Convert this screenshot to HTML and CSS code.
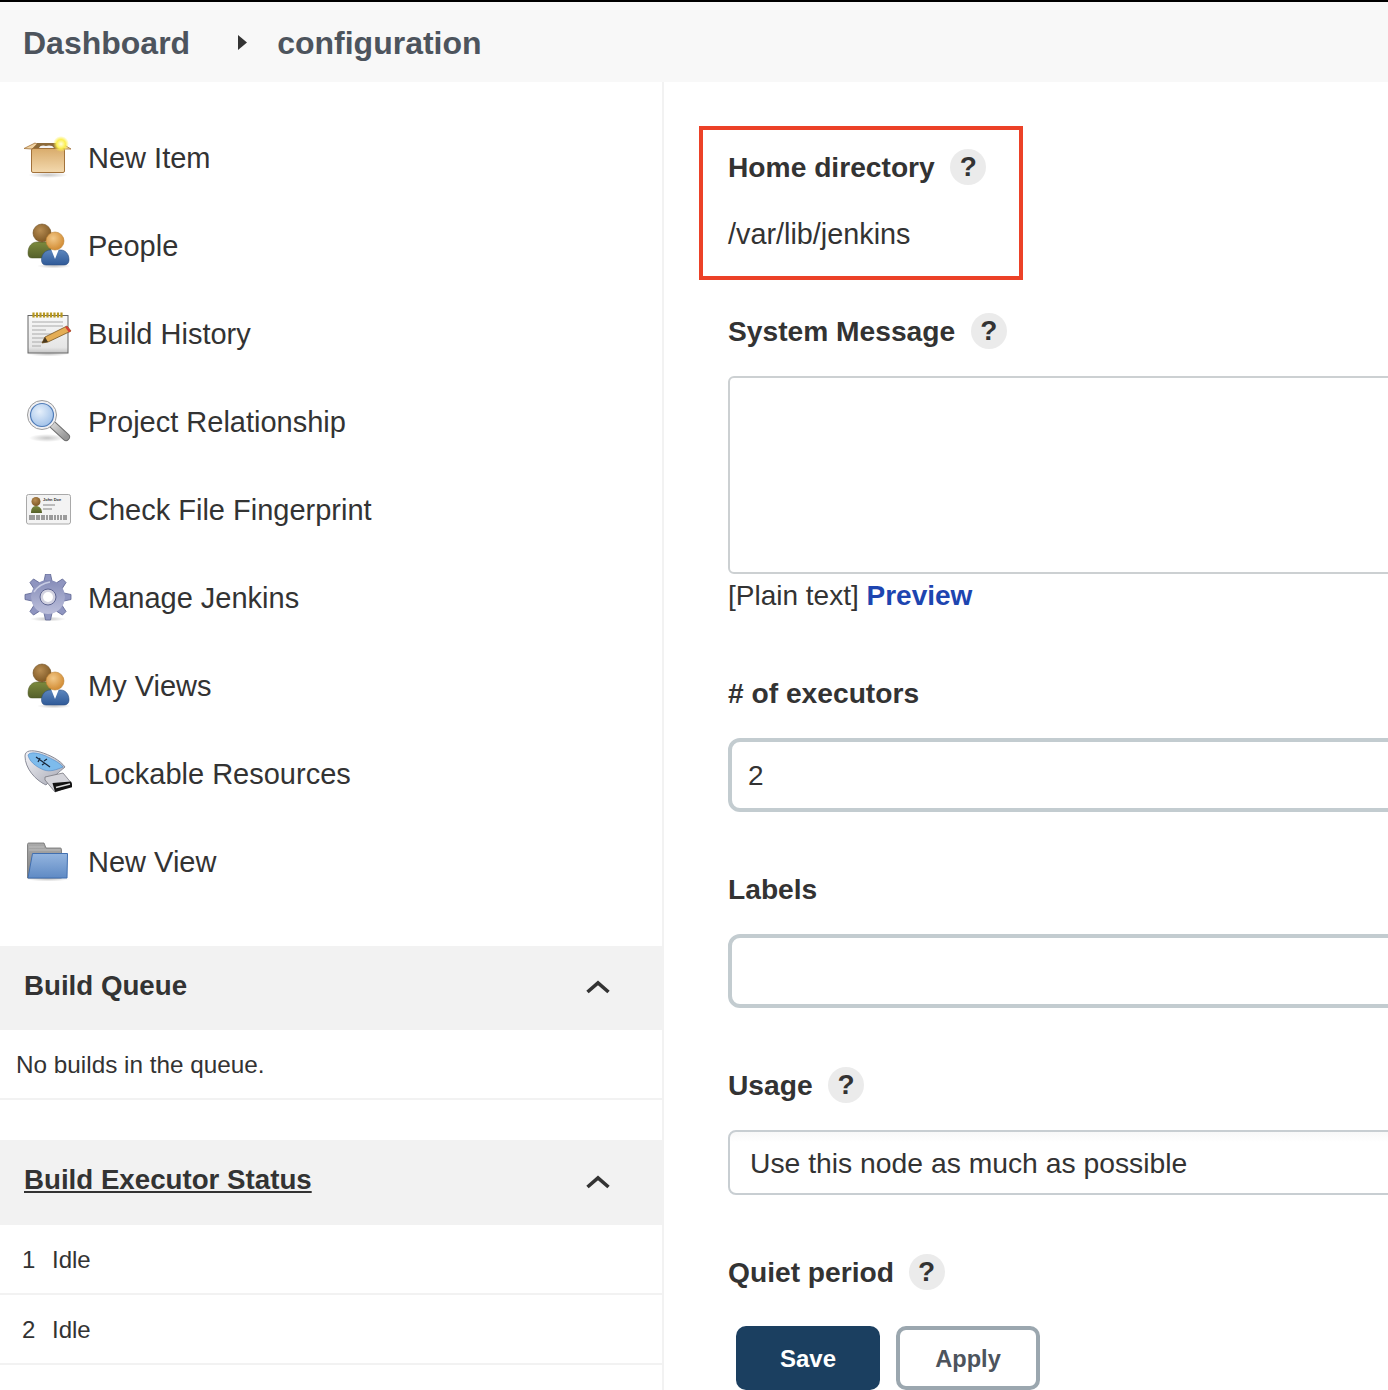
FILE: index.html
```html
<!DOCTYPE html>
<html lang="en">
<head>
<meta charset="utf-8">
<title>Configuration</title>
<link rel="stylesheet" href="styles.css">
</head>
<body>
<svg class="defs" width="0" height="0" aria-hidden="true">
  <defs>
    <linearGradient id="box" x1="0" y1="0" x2="0" y2="1"><stop offset="0" stop-color="#d9ac6c"/><stop offset="1" stop-color="#f3d9ae"/></linearGradient>
    <linearGradient id="bluebody" x1="0" y1="0" x2="0" y2="1"><stop offset="0" stop-color="#5c86bd"/><stop offset="1" stop-color="#2f5a98"/></linearGradient>
    <linearGradient id="greenbody" x1="0" y1="0" x2="0" y2="1"><stop offset="0" stop-color="#7c8a3e"/><stop offset="1" stop-color="#55602a"/></linearGradient>
    <radialGradient id="headb" cx=".4" cy=".35" r=".7"><stop offset="0" stop-color="#b88d52"/><stop offset="1" stop-color="#7b5522"/></radialGradient>
    <radialGradient id="heado" cx=".4" cy=".35" r=".7"><stop offset="0" stop-color="#f2c888"/><stop offset="1" stop-color="#d0882e"/></radialGradient>
    <radialGradient id="glass" cx=".4" cy=".35" r=".7"><stop offset="0" stop-color="#e6f0fb"/><stop offset="1" stop-color="#9fc0e8"/></radialGradient>
    <linearGradient id="gear" x1="0" y1="0" x2="0" y2="1"><stop offset="0" stop-color="#858cb8"/><stop offset="1" stop-color="#bdc0dc"/></linearGradient>
    <linearGradient id="folder" x1="0" y1="0" x2="0" y2="1"><stop offset="0" stop-color="#94b5df"/><stop offset="1" stop-color="#5f8ac4"/></linearGradient>
    <linearGradient id="folderback" x1="0" y1="0" x2="0" y2="1"><stop offset="0" stop-color="#aaa"/><stop offset="1" stop-color="#808080"/></linearGradient>
    <linearGradient id="usb" x1="0" y1="0" x2="1" y2="1"><stop offset="0" stop-color="#f4f4f8"/><stop offset="1" stop-color="#a4a6b2"/></linearGradient>
    <linearGradient id="handle" x1="0" y1="0" x2="1" y2="1"><stop offset="0" stop-color="#d2d2d2"/><stop offset="1" stop-color="#969696"/></linearGradient>
    <linearGradient id="note" x1="0" y1="0" x2="0" y2="1"><stop offset="0" stop-color="#f8f8f8"/><stop offset=".85" stop-color="#e6e6e6"/><stop offset="1" stop-color="#c4c4c4"/></linearGradient>
    <radialGradient id="shine"><stop offset="0" stop-color="#fffde0"/><stop offset=".55" stop-color="#fcef50"/><stop offset="1" stop-color="#fcef50" stop-opacity="0"/></radialGradient>
    <radialGradient id="shadow"><stop offset="0" stop-color="#000" stop-opacity=".22"/><stop offset="1" stop-color="#000" stop-opacity="0"/></radialGradient>
    <symbol id="people" viewBox="0 0 48 48">
      <ellipse cx="30" cy="44" rx="17" ry="2.500" fill="url(#shadow)"/>
      <path d="M4 31c0-7 4-11 9-11h10c5 0 7 4 7 9 0 4-3 7-10 7H8c-3 0-4-2-4-5z" fill="url(#greenbody)" stroke="#4a5425" stroke-width=".5"/>
      <circle cx="18" cy="11" r="9" fill="url(#headb)" stroke="#6f4e20" stroke-width=".6"/>
      <path d="M17.500 38c0-6 4-10 9-10h10c5 0 8.500 4 8.500 10 0 3-2 5-5 5H22c-3 0-4.500-2-4.500-5z" fill="url(#bluebody)" stroke="#2d4f82" stroke-width=".6"/>
      <path d="M27 27l4 10 4-10z" fill="#fff"/>
      <circle cx="31" cy="19" r="9" fill="url(#heado)" stroke="#bd8131" stroke-width=".6"/>
    </symbol>
  </defs>
</svg>

<nav class="crumbs">
  <a class="crumb">Dashboard</a>
  <svg class="crumb-arrow" viewBox="0 0 9 15" width="9" height="15"><path d="M0 0l9 7.500-9 7.500z" fill="#333"/></svg>
  <a class="crumb">configuration</a>
</nav>

<div class="page">
  <aside class="side">
    <ul class="tasks">
      <li class="task">
        <svg class="ico" viewBox="0 0 48 48"><ellipse cx="24" cy="41" rx="20" ry="3" fill="url(#shadow)"/><path d="M8 15l5-6h23l5 6z" fill="#8c6a3a"/><path d="M15 14c1-3 5-3 7-2 2-1 7-1 8 2z" fill="#f4f4f4"/><path d="M0 14.500L11 9l2 1-5 5z" fill="#f0d3a3" stroke="#a2723a" stroke-width=".8"/><path d="M47 15l-10-6-2 1 6 5z" fill="#f0d3a3" stroke="#a2723a" stroke-width=".8"/><rect x="7.500" y="14.500" width="33" height="24" rx="1.500" fill="url(#box)" stroke="#a2723a"/><circle cx="37" cy="10" r="8" fill="url(#shine)"/></svg>
        <span class="task-label">New Item</span>
      </li>
      <li class="task">
        <svg class="ico"><use href="#people"/></svg>
        <span class="task-label">People</span>
      </li>
      <li class="task">
        <svg class="ico" viewBox="0 0 48 48"><ellipse cx="24" cy="44" rx="21" ry="2.500" fill="url(#shadow)"/><rect x="4" y="5.500" width="40" height="37.500" fill="url(#note)" stroke="#666"/><path d="M9.500 2.500v5m3.500-5v5m3.500-5v5m3.500-5v5m3.500-5v5m3.500-5v5m3.500-5v5m3.500-5v5m3.500-5v5" stroke="#b8981f" stroke-width="2.200"/><path d="M8 12h31M8 16h31M8 20h14M8 24h28M8 28h14M8 32h12M8 36h9" stroke="#aaa"/><path d="M18 33l3-6 22-11 4 5-23 11z" fill="#e4ad55" stroke="#7a5520" stroke-width=".8"/><path d="M18 33l3-6 3 5z" fill="#4a3a20"/><path d="M41 17l2-1 4 5-2 1.500z" fill="#d4403a"/></svg>
        <span class="task-label">Build History</span>
      </li>
      <li class="task">
        <svg class="ico" viewBox="0 0 48 48"><ellipse cx="23" cy="40" rx="18" ry="4" fill="url(#shadow)"/><path d="M29 27l13 12" stroke="#6e6e6e" stroke-width="8" stroke-linecap="round"/><path d="M29 27l13 12" stroke="url(#handle)" stroke-width="6" stroke-linecap="round"/><circle cx="18" cy="17" r="14.500" fill="#f0f0f3" stroke="#9c9c9c"/><circle cx="18" cy="17" r="11.500" fill="url(#glass)" stroke="#4f7cb8" stroke-width="1.200"/></svg>
        <span class="task-label">Project Relationship</span>
      </li>
      <li class="task">
        <svg class="ico" viewBox="0 0 48 48"><rect x="2.500" y="8.500" width="44" height="29.500" rx="2" fill="#f3f3f3" stroke="#a9a9a9"/><circle cx="12" cy="15.500" r="4.500" fill="url(#headb)"/><path d="M7 27c0-5 2-7 5-7s6 2 6 7z" fill="url(#greenbody)"/><text class="card-name" x="19" y="15">John Doe</text><path d="M19 19h12M19 23h9" stroke="#aaa" stroke-width="1.300"/><path d="M6 29v5M8 29v5M10 29v5M13 29v5M15 29v5M18 29v5M20 29v5M23 29v5M26 29v5M28 29v5M31 29v5M34 29v5M37 29v5M40 29v5M42 29v5" stroke="#444"/></svg>
        <span class="task-label">Check File Fingerprint</span>
      </li>
      <li class="task">
        <svg class="ico" viewBox="0 0 48 48">
          <ellipse cx="24" cy="45" rx="18" ry="2.500" fill="url(#shadow)"/>
          <g stroke="#5d6492" stroke-width=".8" fill="#8f95c0">
            <path d="M20 7l1.500-7h5L28 7z"/>
            <path d="M20 7l1.500-7h5L28 7z" transform="rotate(45 24 23)"/>
            <path d="M20 7l1.500-7h5L28 7z" transform="rotate(90 24 23)"/>
            <path d="M20 7l1.500-7h5L28 7z" transform="rotate(135 24 23)"/>
            <path d="M20 7l1.500-7h5L28 7z" transform="rotate(180 24 23)"/>
            <path d="M20 7l1.500-7h5L28 7z" transform="rotate(225 24 23)"/>
            <path d="M20 7l1.500-7h5L28 7z" transform="rotate(270 24 23)"/>
            <path d="M20 7l1.500-7h5L28 7z" transform="rotate(315 24 23)"/>
          </g>
          <circle cx="24" cy="23" r="17" fill="url(#gear)"/>
          <path d="M10 18c4-6 9-9 16-10" fill="none" stroke="#d6d9ec" stroke-width="1.500" opacity=".8"/>
          <circle cx="24" cy="23" r="8" fill="#d2d2e0" stroke="#5d6492"/>
          <circle cx="24" cy="23" r="5" fill="#fff"/>
        </svg>
        <span class="task-label">Manage Jenkins</span>
      </li>
      <li class="task">
        <svg class="ico"><use href="#people"/></svg>
        <span class="task-label">My Views</span>
      </li>
      <li class="task">
        <svg class="ico" viewBox="0 0 48 48">
          <path d="M1 6C1 0 8 0 16 2c10 3 20 8 25 15-6 5-12 10-19 18C11 30 1 18 1 6z" fill="url(#usb)" stroke="#8a8c98"/>
          <path d="M4 5c2-4 12-2 20 2 6 3 12 6 15 10-7 3-13 5-19 3C12 17 5 11 4 5z" fill="#7dbbec" stroke="#4f86c4" stroke-width=".6"/>
          <path d="M12 7l14 10M16 8l-2 4M20 11l3-2M21 13l-3 2" stroke="#18263a" stroke-width="1.200"/>
          <path d="M21 27l18-4 10 12-18 7-10-12z" fill="#d4d4da" stroke="#77777f" stroke-width=".8"/>
          <path d="M28.500 33l18.500-1.500 2 5.500-18 5z" fill="#111"/>
          <path d="M32 37.500l14-3.500" stroke="#ddd" stroke-width="1.300"/>
        </svg>
        <span class="task-label">Lockable Resources</span>
      </li>
      <li class="task">
        <svg class="ico" viewBox="0 0 48 48"><ellipse cx="24" cy="41" rx="22" ry="2.500" fill="url(#shadow)"/><path d="M3.500 6.500c0-1 .5-1.500 1.500-1.500h15l2 5h14c1 0 1.500.5 1.500 1.500V40h-34z" fill="url(#folderback)" stroke="#6f6f6f" stroke-width=".8"/><path d="M5 9h15M5 12h31" stroke="#c4c4c4" stroke-width=".8"/><path d="M8.500 15.500h35L43 40H4z" fill="url(#folder)" stroke="#416fb0"/></svg>
        <span class="task-label">New View</span>
      </li>
    </ul>

    <section class="panel panel-queue">
      <header class="panel-head">
        <h2 class="panel-title">Build Queue</h2>
        <svg class="chev" viewBox="0 0 24 14" width="24" height="14"><path d="M1.500 12L12 2.800 22.500 12" fill="none" stroke="#333" stroke-width="3.600"/></svg>
      </header>
      <div class="panel-row panel-row-q">No builds in the queue.</div>
    </section>

    <section class="panel panel-exec">
      <header class="panel-head panel-head-exec">
        <h2 class="panel-title panel-link">Build Executor Status</h2>
        <svg class="chev" viewBox="0 0 24 14" width="24" height="14"><path d="M1.500 12L12 2.800 22.500 12" fill="none" stroke="#333" stroke-width="3.600"/></svg>
      </header>
      <div class="panel-row"><span class="num">1</span>Idle</div>
      <div class="panel-row"><span class="num">2</span>Idle</div>
    </section>
  </aside>

  <main class="main">
    <section class="home">
      <div class="label-line"><span class="label">Home directory</span><span class="help">?</span></div>
      <div class="home-val">/var/lib/jenkins</div>
    </section>

    <div class="label-line label-sys"><span class="label">System Message</span><span class="help">?</span></div>
    <div class="area"></div>
    <div class="hint">[Plain text] <a class="preview">Preview</a></div>

    <div class="label-line label-exec"><span class="label"># of executors</span></div>
    <div class="field">2</div>

    <div class="label-line label-lab"><span class="label">Labels</span></div>
    <div class="field"></div>

    <div class="label-line label-lab"><span class="label">Usage</span><span class="help">?</span></div>
    <div class="select">Use this node as much as possible</div>

    <div class="label-line label-quiet"><span class="label">Quiet period</span><span class="help help-quiet">?</span></div>
    <div class="buttons">
      <button class="btn btn-save">Save</button>
      <button class="btn btn-apply">Apply</button>
    </div>
  </main>
</div>
</body>
</html>
```
FILE: styles.css
```css
* { box-sizing: border-box; }
html, body { margin: 0; height: 1390px; overflow: hidden; background: #fff; }
body { font-family: "Liberation Sans", Arial, sans-serif; color: #333; }
.defs { position: absolute; }

.crumbs { height: 82px; border-top: 2px solid #000; background: #f8f8f8; display: flex; align-items: center; padding: 2px 0 0 23px; }
.crumb { font-size: 32px; font-weight: 700; color: #4d545d; }
.crumb-arrow { margin: -2px 30px 0 48px; }

.page { display: flex; height: 1308px; }
.side { width: 664px; flex: none; border-right: 2px solid #f2f2f2; padding-top: 32px; }
.tasks { list-style: none; margin: 0 0 40px; padding: 0; }
.task { height: 88px; display: flex; align-items: center; padding-left: 24px; gap: 16px; }
.ico { width: 48px; height: 48px; flex: none; }
.card-name { font-size: 4px; font-weight: 700; fill: #333; }
.task-label { font-size: 29px; color: #333; }

.panel-head { height: 84px; background: #f2f2f2; display: flex; align-items: center; justify-content: space-between; padding: 0 52px 0 24px; }
.panel-head-exec { height: 85px; }
.panel-title { margin: 0; padding-bottom: 4px; font-size: 27.700px; font-weight: 700; color: #333; }
.panel-link { padding-bottom: 6px; text-decoration: underline; }
.chev { margin-bottom: 2px; }
.panel-row { height: 70px; border-bottom: 2px solid #f2f2f2; display: flex; align-items: center; padding: 2px 0 0 22px; font-size: 24px; color: #333; }
.panel-row-q { padding-left: 16px; font-size: 24.300px; }
.panel-queue { margin-bottom: 40px; }
.num { width: 30px; }

.main { flex: 1; min-width: 0; overflow: hidden; padding: 44px 0 0 35px; }
.home { width: 324px; height: 154px; border: 4px solid #ec4127; padding: 0 0 0 25px; }
.label-line { display: flex; align-items: center; height: 36px; gap: 15.500px; margin-left: 29px; }
.home .label-line { margin: 19px 0 0; }
.label { font-size: 28.200px; font-weight: 700; color: #333; }
.help { width: 36px; height: 36px; border-radius: 50%; background: #ebebeb; display: flex; align-items: center; justify-content: center; font-size: 28px; font-weight: 700; color: #333; }
.help-quiet { margin-left: -1px; }
.home-val { font-size: 28.800px; margin-top: 31px; line-height: 36px; }
.label-sys { margin-top: 33px; }
.area { margin: 27px -40px 0 29px; height: 198px; border: 2px solid #ccd0d2; border-radius: 6px; }
.hint { margin: 4px 0 0 29px; font-size: 28px; line-height: 36px; }
.preview { color: #1d45b0; font-weight: 700; }
.label-exec { margin-top: 61px; }
.label-lab { margin-top: 59px; }
.field { margin: 27px -40px 0 29px; height: 74px; border: 4px solid #c3ccd0; border-radius: 12px; padding-left: 16px; font-size: 28px; line-height: 68px; }
.select { margin: 27px -40px 0 29px; height: 65px; border: 2px solid #c8ced2; border-radius: 8px; padding-left: 20px; font-size: 28.300px; line-height: 62px; background: linear-gradient(#f8f8f8, #fff 10px); }
.label-quiet { margin-top: 59px; }
.buttons { display: flex; gap: 16px; margin: 36px 0 0 37px; }
.btn { width: 144px; height: 64px; border-radius: 10px; padding: 2px 0 0; font: 700 24px "Liberation Sans", Arial, sans-serif; }
.btn-save { background: #1b3f60; color: #fff; border: 0; }
.btn-apply { background: #fff; color: #4d545d; border: 4px solid #9ba7af; font-size: 23.600px; }
```
